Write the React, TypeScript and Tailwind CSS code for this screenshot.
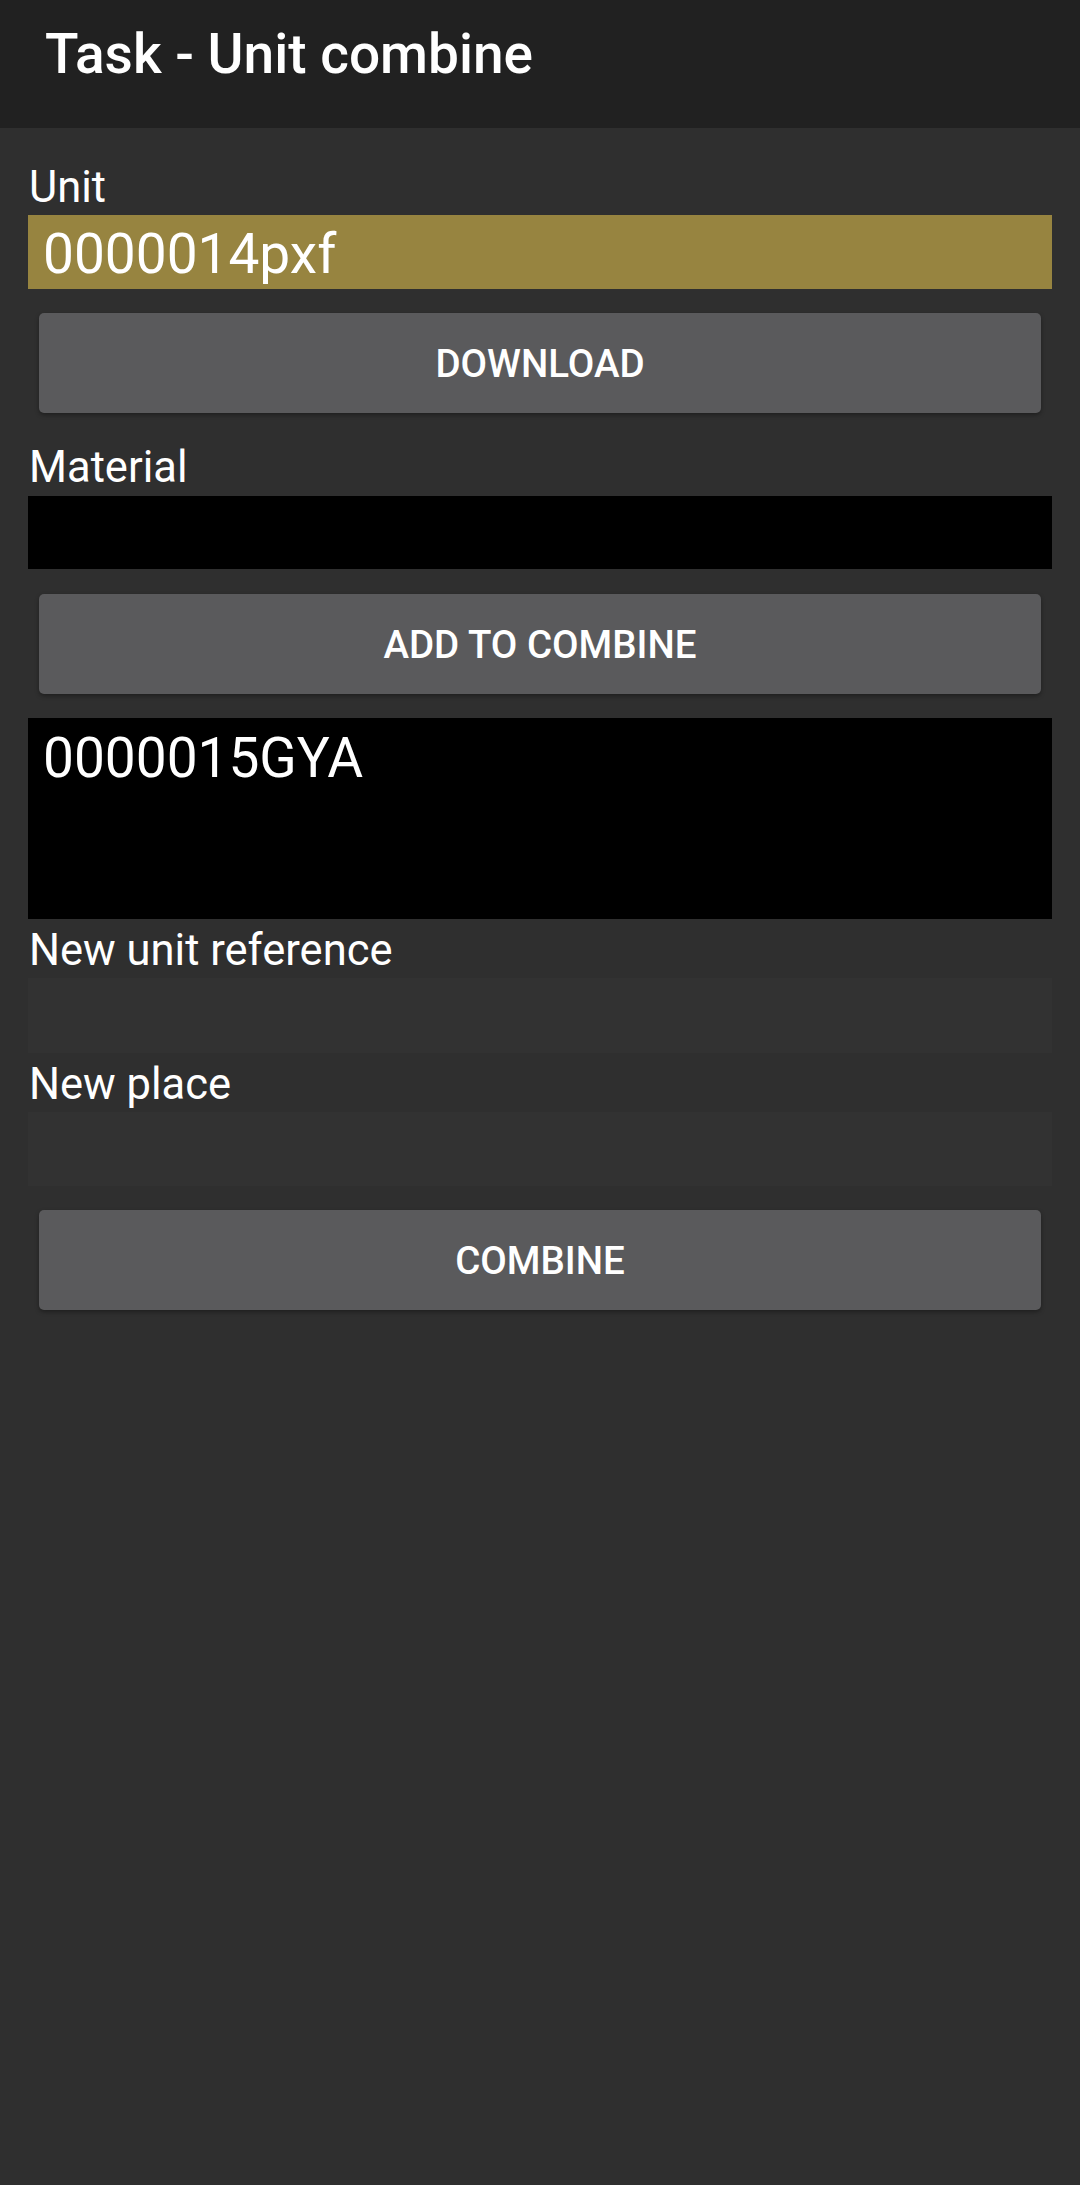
const font = { fontFamily: "Roboto, 'Noto Sans', sans-serif" };

const Label = ({ text, className = "" }: { text: string; className?: string }) => (
  <div className={`pl-px text-[43.5px] leading-[50px] text-white ${className}`}>{text}</div>
);

const Button = ({ text, className = "" }: { text: string; className?: string }) => (
  <button
    className={`mx-[11px] flex h-[100px] items-center justify-center rounded-[5px] bg-[#5a5a5c] pt-[2px] text-[38.5px] font-medium text-white shadow-[0_2px_4px_rgba(0,0,0,0.35)] ${className}`}
  >
    {text}
  </button>
);

export default function App() {
  return (
    <div className="min-h-[2185px] w-[1080px] bg-[#2f2f2f]" style={font}>
      {/* Toolbar */}
      <div className="h-[128px] bg-[#212121] pl-[45px] pt-[22px]">
        <h1 className="text-[55px] font-medium leading-[64px] text-white">Task - Unit combine</h1>
      </div>

      <div className="flex flex-col px-[28px] pt-[35px]">
        <Label text="Unit" />
        <div className="mt-[2px] h-[74px] overflow-hidden bg-[#978440] pl-[15px] text-[55px] leading-[78px] text-white">
          0000014pxf
        </div>
        <Button text="DOWNLOAD" className="mt-[24px]" />

        <Label text="Material" className="mt-[30px]" />
        <div className="mt-[3px] h-[73px] bg-black" />
        <Button text="ADD TO COMBINE" className="mt-[25px]" />

        {/* combined units list */}
        <div className="mt-[24px] h-[201px] bg-black pl-[15px] pt-[8px]">
          <div className="text-[55px] leading-[64px] text-white">0000015GYA</div>
        </div>

        <Label text="New unit reference" className="mt-[7px]" />
        <div className="mt-[2px] h-[75px] bg-[#323232]" />

        <Label text="New place" className="mt-[7px]" />
        <div className="mt-[2px] h-[74px] bg-[#323232]" />

        <Button text="COMBINE" className="mt-[24px]" />
      </div>
    </div>
  );
}
